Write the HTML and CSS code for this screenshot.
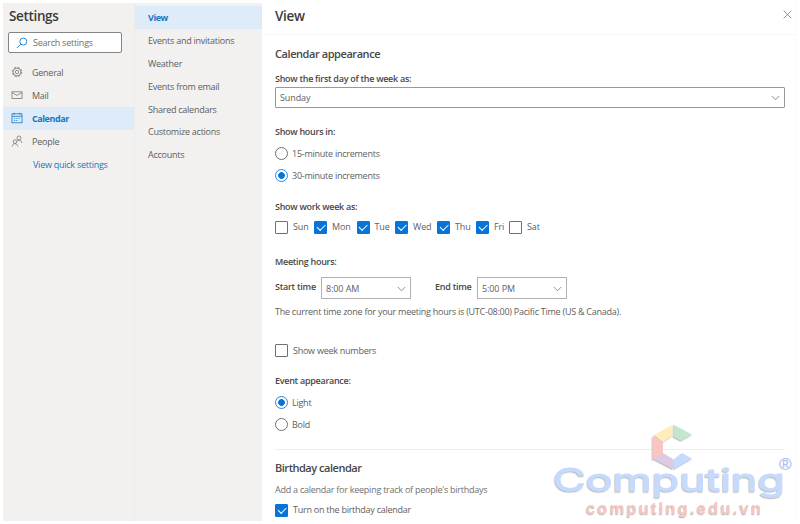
FILE: index.html
```html
<!DOCTYPE html>
<html lang="en">
<head>
<meta charset="utf-8">
<title>Settings</title>
<link rel="stylesheet" href="styles.css">
</head>
<body>
<div class="app">
  <aside class="sidebar">
    <h1>Settings</h1>
    <div class="search">
      <svg width="12" height="12" viewBox="0 0 12 12"><circle cx="7.3" cy="4.6" r="3.5"/><path d="M4.8 7.1.8 11.1"/></svg>
      <span>Search settings</span>
    </div>
    <nav>
      <div class="nav-row"><svg width="12" height="12" viewBox="0 0 12 12"><circle cx="6" cy="6" r="4.700" stroke-dasharray="2.2 1.490"/><circle cx="6" cy="6" r="3.900"/><circle cx="6" cy="6" r="1.7"/></svg><span>General</span></div>
      <div class="nav-row"><svg width="12" height="12" viewBox="0 0 12 12"><rect x="1" y="2.8" width="10" height="6.6"/><path d="m1 3.5 5 2.9 5-2.9"/></svg><span>Mail</span></div>
      <div class="nav-row active"><svg width="12" height="12" viewBox="0 0 12 12"><rect x="1" y="1.8" width="10" height="9"/><path d="M1 4.3h10M3.2.8v2M8.8.8v2"/><path stroke-dasharray="1.200 1" d="M3 6.3h6.2M3 8.5h4.5"/></svg><span>Calendar</span></div>
      <div class="nav-row"><svg width="12" height="12" viewBox="0 0 12 12"><circle cx="8" cy="3" r="2"/><path d="M5.9 6.2C7.8 4.2 10.6 5.3 10.8 8"/><circle cx="4" cy="6.6" r="1.8"/><path d="M1.2 11.5c.2-3.8 5.3-3.8 5.6 0"/></svg><span>People</span></div>
    </nav>
    <a class="quick"><span>View quick settings</span></a>
  </aside>
  <nav class="sections">
    <div class="section active"><span>View</span></div>
    <div class="section"><span>Events and invitations</span></div>
    <div class="section"><span>Weather</span></div>
    <div class="section"><span>Events from email</span></div>
    <div class="section"><span>Shared calendars</span></div>
    <div class="section"><span>Customize actions</span></div>
    <div class="section"><span>Accounts</span></div>
  </nav>
  <main>
    <header>
      <h1>View</h1>
      <svg width="9" height="9" viewBox="0 0 9 9"><path d="m.7.7 7.6 7.6M8.3.7.7 8.3"/></svg>
    </header>
    <div class="content">
      <h2 class="first">Calendar appearance</h2>
      <div class="label l-first">Show the first day of the week as:</div>
      <div class="select wide"><span>Sunday</span><svg width="9" height="6" viewBox="0 0 9 6"><path d="m.8 1 3.7 3.8L8.2 1"/></svg></div>
      <div class="label l-hours">Show hours in:</div>
      <div class="option"><i class="radio"></i><span>15-minute increments</span></div>
      <div class="option"><i class="radio on"></i><span>30-minute increments</span></div>
      <div class="label l-week">Show work week as:</div>
      <div class="days">
        <div class="sun"><i class="box"></i><span>Sun</span></div>
        <div class="mon"><i class="box on"></i><span>Mon</span></div>
        <div class="tue"><i class="box on"></i><span>Tue</span></div>
        <div class="wed"><i class="box on"></i><span>Wed</span></div>
        <div class="thu"><i class="box on"></i><span>Thu</span></div>
        <div class="fri"><i class="box on"></i><span>Fri</span></div>
        <div class="sat"><i class="box"></i><span>Sat</span></div>
      </div>
      <div class="label l-meeting">Meeting hours:</div>
      <div class="times">
        <b class="start">Start time</b>
        <div class="select"><span>8:00 AM</span><svg width="9" height="6" viewBox="0 0 9 6"><path d="m.8 1 3.7 3.8L8.2 1"/></svg></div>
        <b class="end">End time</b>
        <div class="select"><span>5:00 PM</span><svg width="9" height="6" viewBox="0 0 9 6"><path d="m.8 1 3.7 3.8L8.2 1"/></svg></div>
      </div>
      <p class="zone">The current time zone for your meeting hours is (UTC-08:00) Pacific Time (US &amp; Canada).</p>
      <div class="check weeknum"><i class="box"></i><span>Show week numbers</span></div>
      <div class="label l-event">Event appearance:</div>
      <div class="option"><i class="radio on"></i><span>Light</span></div>
      <div class="option"><i class="radio"></i><span>Bold</span></div>
      <hr>
      <h2 class="second">Birthday calendar</h2>
      <p class="add">Add a calendar for keeping track of people's birthdays</p>
      <div class="check"><i class="box on"></i><span>Turn on the birthday calendar</span></div>
    </div>
  </main>
</div>
<svg class="watermark" width="250" height="104" viewBox="550 420 250 104">
  <defs><filter id="s" x="-10%" y="-10%" width="120%" height="130%"><feDropShadow dx="-.7" dy="1.2" stdDeviation=".5" flood-color="#777" flood-opacity=".5"/></filter></defs>
  <g filter="url(#s)">
    <path fill="#ffedbd" d="m654 435 18.500-10.500v11L663 442z"/>
    <path fill="#c4e6ce" d="m673.500 424.500 18.500 10-11 6-7.500-4z"/>
    <path fill="#fac5c1" d="m652.500 436 10.500 6v12l-10.500 6z"/>
    <path fill="#dfcae5" d="m654 459 9-6 10 6v10z"/>
    <path fill="#c5dafd" d="m674 459 8-6 10 5.500-18 10.500z"/>
    <text class="brand" x="553" y="491" textLength="232" lengthAdjust="spacingAndGlyphs">Computing</text>
    <text class="domain" x="586" y="514" textLength="175">computing.edu.vn</text>
  </g>
  <text class="reg" x="779" y="470">®</text>
</svg>
</body>
</html>
```
FILE: styles.css
```css
* { box-sizing: border-box; }
body { margin: 0; width: 800px; height: 524px; overflow: hidden; background: #fff; color: #606060; font: 9px/12px "Open Sans", "Noto Sans", sans-serif; letter-spacing: -.25px; }
h1, h2, p { margin: 0; }
svg { flex: none; fill: none; stroke: #777; stroke-width: .8; }
span, p, .label, b { white-space: nowrap; }
.app { display: flex; width: 796px; height: 521px; padding: 3px 0 0 3px; }
.sidebar { width: 132px; background: #f2f1ef; border-right: 1px solid #edecea; }
h1 { font-size: 13.500px; line-height: 18px; font-weight: 600; color: #3b3b3b; letter-spacing: -.35px; }
.sidebar h1 { padding: 4px 0 0 6px; }
.search { display: flex; align-items: center; gap: 5px; width: 114px; height: 21px; margin: 7px 0 8px 5px; padding-left: 7px; background: #fff; border: 1px solid #858585; border-radius: 2px; color: #707070; }
.search svg { stroke: #2b88d8; stroke-width: 1; }
.nav-row { display: flex; align-items: center; gap: 9px; height: 22.9px; padding-left: 8px; }
.nav-row span { margin-top: 1px; }
.active { background: #deecf9; color: #1976bf; font-weight: 700; letter-spacing: -.45px; }
.active svg { stroke: #1976bf; }
.quick { display: block; padding: 6px 0 0 30px; color: #1976bf; }
.sections { width: 127px; padding-top: 3px; background: #f2f1ef; }
.section { height: 22.9px; padding: 6px 0 0 13px; }
main { flex: 1; border-right: 1px solid #fafafa; }
header { display: flex; justify-content: space-between; height: 32px; padding: 4px 3px 0 13px; border-bottom: 1px solid #f6f6f6; }
header svg { margin-top: 3px; }
.content { padding-left: 13px; }
h2 { font-size: 11px; line-height: 16px; font-weight: 600; color: #484848; letter-spacing: -.48px; }
.first { margin-top: 11px; letter-spacing: -.43px; }
.label { height: 12px; font-weight: 600; color: #484848; letter-spacing: -.28px; }
.l-first { margin-top: 11px; }
.select { display: flex; align-items: center; justify-content: space-between; width: 90px; height: 22px; padding: 1px 4px 0 4px; border: 1px solid #b2b2b2; letter-spacing: -.1px; }
.wide { width: 510px; height: 21px; margin-top: 2px; padding-top: 0; border-color: #999; border-radius: 1px; }
.l-hours { margin: 18px 0 5px; }
.option { display: flex; align-items: center; gap: 4px; height: 21.7px; }
.radio { width: 13px; height: 13px; border: 1px solid #707070; border-radius: 50%; }
.radio.on { border-color: #2488df; background: radial-gradient(circle, #0874d8 3px, #fff 3.700px); }
.l-week { margin-top: 15px; }
.days { display: flex; height: 13px; margin-top: 7.500px; letter-spacing: -.15px; }
.days div, .check { display: flex; align-items: center; gap: 5px; }
.sun { width: 39px; }
.mon { width: 42.5px; }
.tue { width: 38.5px; }
.wed { width: 42px; }
.thu { width: 39px; }
.fri { width: 33px; }
.box { flex: none; display: flex; align-items: center; justify-content: center; width: 13px; height: 13px; border: 1px solid #707070; border-radius: 1px; }
.box.on { border-color: #0874d8; background: #0874d8; }
.box.on::after { content: ""; width: 7px; height: 3.500px; margin-top: -3px; border: solid #fff; border-width: 0 0 1px 1px; transform: rotate(-45deg); }
.l-meeting { margin-top: 22.500px; }
.times { display: flex; height: 22px; margin-top: 9px; line-height: 20px; }
.times b { font-weight: 600; color: #484848; }
.start { width: 46px; }
.end { width: 42px; margin-left: 24px; }
.zone { margin-top: 7px; height: 12px; }
.weeknum { margin-top: 26px; }
.l-event { margin: 18px 0 4.600px; }
hr { width: 510px; height: 1px; margin: 13.500px 0 0; border: 0; background: #eee; }
.second { margin-top: 10px; }
.add { height: 12px; margin-top: 8px; color: #707070; }
.add + .check { margin-top: 8px; }
.watermark { position: absolute; left: 550px; top: 420px; stroke: none; }
.brand { font: 30.500px "Inter", sans-serif; fill: #c5dafd; stroke: #c5dafd; stroke-width: 1px; letter-spacing: 0; }
.reg { font: 17px "Liberation Sans", sans-serif; fill: #abc5ec; stroke: #abc5ec; stroke-width: .3px; letter-spacing: 0; }
.domain { font: bold 16.500px "Liberation Sans", sans-serif; fill: #fac5c1; letter-spacing: 0; }
```
